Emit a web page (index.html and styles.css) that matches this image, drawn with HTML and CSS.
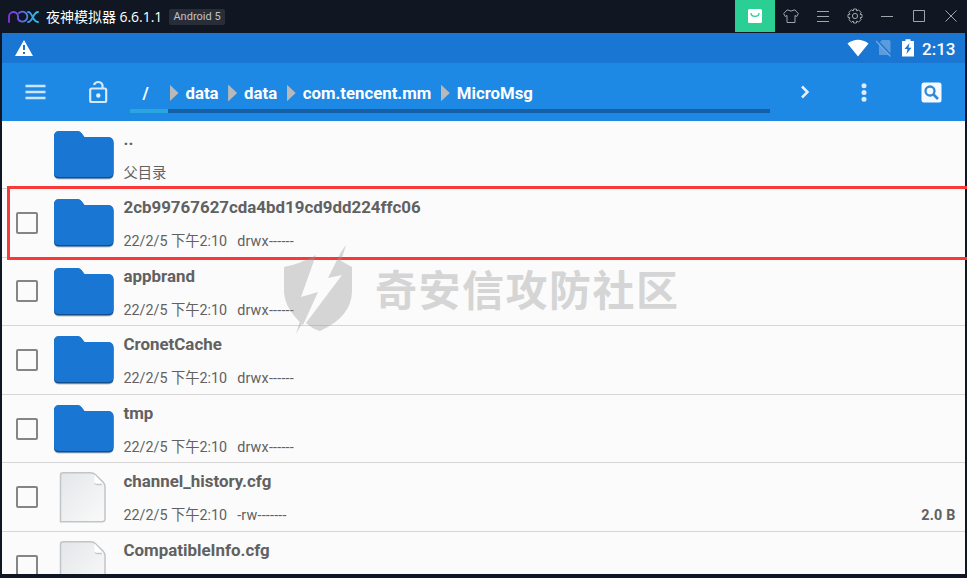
FILE: index.html
```html
<!DOCTYPE html>
<html lang="zh-CN">
<head>
<meta charset="utf-8">
<title>夜神模拟器</title>
<link rel="stylesheet" href="styles.css">
</head>
<body>
<svg width="0" height="0" class="defs">
  <defs>
    <linearGradient id="nox" gradientUnits="userSpaceOnUse" x1="0" x2="31" y1="0" y2="0"><stop offset="0" stop-color="#8b32df"/><stop offset=".5" stop-color="#5c70e6"/><stop offset="1" stop-color="#18cfe8"/></linearGradient>
    <linearGradient id="paper" x1="0" y1="0" x2="1" y2="1"><stop offset="0" stop-color="#e3e6e9"/><stop offset="1" stop-color="#fafafa"/></linearGradient>
    <symbol id="folder" viewBox="0 0 62 52">
      <path d="M6 3H25.500Q27.500 3 29 5L31.500 8.500H55Q60.500 8.500 60.500 14V44.500Q60.500 49.500 55 49.500H6Q1 49.500 1 44.500V8Q1 3 6 3Z" fill="#9ba4ad" opacity=".6"/>
      <path d="M6 1.500H25Q27 1.500 28.500 3.500L31.500 7.500H55Q60.500 7.500 60.500 13V43.500Q60.500 48.500 55 48.500H6Q1 48.500 1 43.500V7Q1 1.500 6 1.500Z" fill="#124f8c"/>
      <path d="M6 1H25Q27 1 28.500 3L31.500 7H55Q60.500 7 60.500 12.500V42Q60.500 47 55 47H6Q1 47 1 42V6.500Q1 1 6 1Z" fill="#1976d2"/>
    </symbol>
    <symbol id="file" viewBox="0 0 62 52">
      <path d="M9.500 .8H37.500Q40.500 .8 42.500 2.800L49.500 9.500Q52 12 52 14.500V47Q52 49.800 49 49.800H7.500V3.300Q7.500 .8 10 .8Z" fill="url(#paper)" stroke="#c2c5c8" stroke-width="1.500"/>
      <path d="M41.500 2.500V10Q41.500 12.500 44.500 12.500H50.500Z" fill="#fff"/>
      <path d="M42 11.500Q42.500 12.500 44.500 12.500H49" fill="none" stroke="#c6c9cc" stroke-width="1.500"/>
    </symbol>
  </defs>
</svg>
<div class="window">
  <header class="titlebar">
    <svg class="logo" width="31" height="14" viewBox="0 0 31 14" fill="none" stroke="url(#nox)" stroke-width="1.800" stroke-linecap="round"><path d="M1 12V6.500A4.500 4.500 0 0 1 10 6.500V9M10 9A5 5 0 1 0 11 3M20 2C25 2 24 12 30 12M30 2C25 2 25 12 20 12"/></svg>
    <span class="app-name">夜神模拟器 6.6.1.1</span>
    <span class="badge">Android 5</span>
    <nav class="controls">
      <span class="control store"><svg width="16" height="16" viewBox="0 0 16 16"><rect x="1" y="1" width="14" height="14" rx="1.500" fill="#fff"/><path d="M4 5C4 9.500 12 9.500 12 5" fill="none" stroke="#2bcf94" stroke-width="1.300"/></svg></span>
      <span class="control"><svg width="16" height="16" viewBox="0 0 16 16"><path d="M5 2Q8 4.200 11 2H12L15.300 5.500 13.800 8.500 12 7.500V14.500H4V7.500L2.200 8.500.7 5.500 4 2Z"/></svg></span>
      <span class="control"><svg width="16" height="16" viewBox="0 0 16 16"><path d="M2 3.500H14M2 8.500H14M2 13.500H14"/></svg></span>
      <span class="control"><svg width="16" height="16" viewBox="0 0 16 16"><path d="M6.600 1H9.400L9.800 3 11.500 1.800 14.200 4.500 13 6.200 15 6.600V9.400L13 9.800 14.200 11.500 11.500 14.200 9.800 13 9.400 15H6.600L6.200 13 4.500 14.200 1.800 11.500 3 9.800 1 9.400V6.600L3 6.200 1.800 4.500 4.500 1.800 6.200 3Z"/><circle cx="8" cy="8" r="2.600"/></svg></span>
      <span class="control"><svg width="16" height="16" viewBox="0 0 16 16"><path d="M2 8.500H14"/></svg></span>
      <span class="control"><svg width="16" height="16" viewBox="0 0 16 16"><path d="M2.500 2.500H13.500V13.500H2.500Z"/></svg></span>
      <span class="control"><svg width="16" height="16" viewBox="0 0 16 16"><path d="M2.500 2.500L13.500 13.500M13.500 2.500L2.500 13.500"/></svg></span>
    </nav>
  </header>
  <main class="screen">
    <div class="statusbar">
      <svg width="20" height="18" viewBox="0 0 20 18"><path d="M10 1L19 17H1Z" fill="#fff"/><path d="M10 6V11M10 13V15" stroke="#1976d2" stroke-width="2"/></svg>
      <div class="status-right">
        <svg width="22" height="18" viewBox="0 0 22 18"><path d="M.5 4.500Q11-3 21.500 4.500L11 17.500Z" fill="#fff"/></svg>
        <svg class="sim" width="16" height="18" viewBox="0 0 16 18"><path d="M3 4L6 1H13Q14.500 1 14.500 2.500V16H3Z" fill="#5b9cde"/><path d="M1.500 1.500L16 17" stroke="#1976d2" stroke-width="1.500"/><path d="M0 2L14.500 17.500" stroke="#6da8e2" stroke-width="1.400"/></svg>
        <svg class="battery" width="12" height="18" viewBox="0 0 12 18"><path d="M0 2H3.500V.3H8.500V2H12V17.500H0Z" fill="#fff"/><path d="M7.500 4L2.500 10H5.500L4.500 15L9.500 8.700H6.500Z" fill="#1976d2"/></svg>
        <span class="clock">2:13</span>
      </div>
    </div>
    <div class="toolbar">
      <svg class="menu" width="22" height="16" viewBox="0 0 22 16"><path d="M.5 2H20.500M.5 8H20.500M.5 14H20.500" stroke="#cde5fa" stroke-width="2.600"/></svg>
      <svg class="lock" width="20" height="24" viewBox="0 0 20 24" fill="none" stroke="#d5e9fb" stroke-width="2.200"><rect x="2.200" y="8.500" width="16" height="13.500" rx="1.500"/><path d="M6 5A4.500 4.500 0 0 1 14.500 5V8.500"/><circle cx="10.300" cy="15.500" r="2.200" fill="#e2f0fc" stroke="none"/></svg>
      <div class="path">
        <div class="crumbs">
          <span class="root">/</span><i class="sep"></i><span>data</span><i class="sep"></i><span>data</span><i class="sep"></i><span>com.tencent.mm</span><i class="sep"></i><span>MicroMsg</span>
        </div>
        <div class="usage"><div class="used"></div></div>
      </div>
      <svg class="next" width="10" height="14" viewBox="0 0 10 14"><path d="M2 1.500L7.500 7L2 12.500" fill="none" stroke="#e2f0fc" stroke-width="2.500"/></svg>
      <svg class="more" width="6" height="20" viewBox="0 0 6 20" fill="#d9ecfc"><circle cx="3" cy="3.800" r="2.500"/><circle cx="3" cy="10.500" r="2.500"/><circle cx="3" cy="17.200" r="2.500"/></svg>
      <svg class="search" width="22" height="22" viewBox="0 0 22 22"><rect x=".5" y="1.500" width="20" height="20" rx="2.500" fill="#f4faff"/><circle cx="9" cy="10" r="4.500" fill="none" stroke="#3289d5" stroke-width="2.300"/><path d="M12.500 13.500L17 18" stroke="#3289d5" stroke-width="2.600"/></svg>
    </div>
    <div class="list">
      <div class="row parent"><span></span><svg class="icon"><use href="#folder"/></svg><div class="text"><div class="name">..</div><div class="meta">父目录</div></div></div>
      <div class="row"><span class="check"></span><svg class="icon"><use href="#folder"/></svg><div class="text"><div class="name">2cb99767627cda4bd19cd9dd224ffc06</div><div class="meta"><span>22/2/5 下午2:10</span><span class="mode">drwx------</span></div></div></div>
      <div class="row"><span class="check"></span><svg class="icon"><use href="#folder"/></svg><div class="text"><div class="name">appbrand</div><div class="meta"><span>22/2/5 下午2:10</span><span class="mode">drwx------</span></div></div></div>
      <div class="row"><span class="check"></span><svg class="icon"><use href="#folder"/></svg><div class="text"><div class="name">CronetCache</div><div class="meta"><span>22/2/5 下午2:10</span><span class="mode">drwx------</span></div></div></div>
      <div class="row"><span class="check"></span><svg class="icon"><use href="#folder"/></svg><div class="text"><div class="name">tmp</div><div class="meta"><span>22/2/5 下午2:10</span><span class="mode">drwx------</span></div></div></div>
      <div class="row"><span class="check"></span><svg class="icon"><use href="#file"/></svg><div class="text"><div class="name">channel_history.cfg</div><div class="meta"><span>22/2/5 下午2:10</span><span class="mode">-rw-------</span><span class="size">2.0 B</span></div></div></div>
      <div class="row"><span class="check"></span><svg class="icon"><use href="#file"/></svg><div class="text"><div class="name">CompatibleInfo.cfg</div></div></div>
    </div>
  </main>
  <div class="highlight"></div>
  <div class="watermark">
    <svg width="70" height="90" viewBox="0 0 70 90" fill="#999"><path d="M32 10L17 52L34 47L19 80Q1 64 0 47V22Q16 19 32 10Z"/><path d="M62 0L57 16L68 22V47Q67 72 36 86Q27 83 22 78L58 30L44 33L57 7Z"/><path d="M19 77L12 89L16 76Z"/></svg>
    <span>奇安信攻防社区</span>
  </div>
</div>
</body>
</html>
```
FILE: styles.css
```css
* { box-sizing: border-box; }
body { margin: 0; background: #111722; font-family: Roboto, "Noto Sans CJK SC", sans-serif; }
svg { display: block; flex: none; }
.defs { position: absolute; }
.window { position: relative; width: 967px; height: 578px; overflow: hidden; }
.titlebar { display: flex; align-items: center; height: 33px; padding-left: 8px; }
.app-name { margin-left: 7px; width: 116px; font: 14px/20px "Open Sans", "Noto Sans CJK SC", sans-serif; letter-spacing: -.03px; color: #fff; white-space: nowrap; }
.badge { margin-left: 7px; width: 56px; height: 16px; border-radius: 2px; background: #292d37; color: #c0c3c8; font-size: 11px; line-height: 16px; text-align: center; white-space: nowrap; }
.controls { display: flex; align-self: flex-start; margin-left: auto; }
.control { display: grid; place-items: center; width: 32px; height: 32px; }
.control svg { fill: none; stroke: #a1a4aa; stroke-width: 1; }
.store { width: 40px; background: #2bcf94; }
.store svg { stroke: none; }
.screen { display: flex; flex-direction: column; height: 541px; margin: 0 2px; overflow: hidden; background: #fbfbfb; }
.statusbar { display: flex; flex: none; justify-content: space-between; align-items: center; height: 30px; padding: 0 10px 0 12px; background: #1976d2; }
.status-right { display: flex; align-items: center; }
.sim { margin-left: 7px; }
.battery { margin-left: 10px; }
.clock { width: 33px; margin-left: 8px; color: #fff; font-size: 17px; font-weight: 500; line-height: 22px; padding-top: 1px; white-space: nowrap; }
.toolbar { display: flex; flex: none; align-items: center; height: 58px; padding: 0 22px 0 23px; background: #1e88e5; }
.lock { margin-left: 41px; }
.path { display: flex; flex-direction: column; width: 640px; height: 58px; margin-left: 22px; padding-top: 18px; }
.crumbs { display: flex; align-items: center; height: 24px; padding-left: 12.5px; color: #fff; font-size: 16.8px; font-weight: 700; }
.root { width: 17.5px; }
.sep { width: 9px; height: 17px; margin: 0 7px 0 9.5px; background: #b9b9b9; clip-path: polygon(0 0, 100% 50%, 0 100%); }
.usage { height: 4px; margin-top: 4px; background: #145fa5; }
.used { width: 38px; height: 4px; background: #2ba5df; }
.next { margin-left: 30px; }
.more { margin-left: 51px; }
.search { margin-left: auto; }
.row { display: grid; grid-template-columns: 52px 69.5px 1fr; height: 68.6px; padding-right: 9.5px; border-bottom: 1px solid #d6d6d6; }
.row.parent { height: 68px; }
.check { align-self: center; width: 22px; height: 22px; margin-left: 13.5px; border: 2px solid #858585; border-radius: 2px; }
.icon { width: 62px; height: 52px; margin-top: 9px; margin-left: -1px; }
.text { color: #616161; }
.name { height: 38px; padding-top: 7px; font-size: 16.9px; font-weight: 700; line-height: 22px; }
.meta { display: flex; height: 28px; font-size: 14.3px; line-height: 28px; white-space: pre; }
.mode { margin-left: 10px; letter-spacing: .22px; }
.size { margin-left: auto; font-weight: 700; letter-spacing: .2px; }
.highlight { position: absolute; left: 7px; top: 186px; width: 963px; height: 74px; border: 3px solid #f93838; }
.watermark { position: absolute; left: 284px; top: 245px; display: flex; opacity: .38; }
.watermark span { margin: 13px 0 0 21px; color: #999; font: 700 42px/60px "Noto Sans CJK SC", sans-serif; letter-spacing: 1.5px; }
```
